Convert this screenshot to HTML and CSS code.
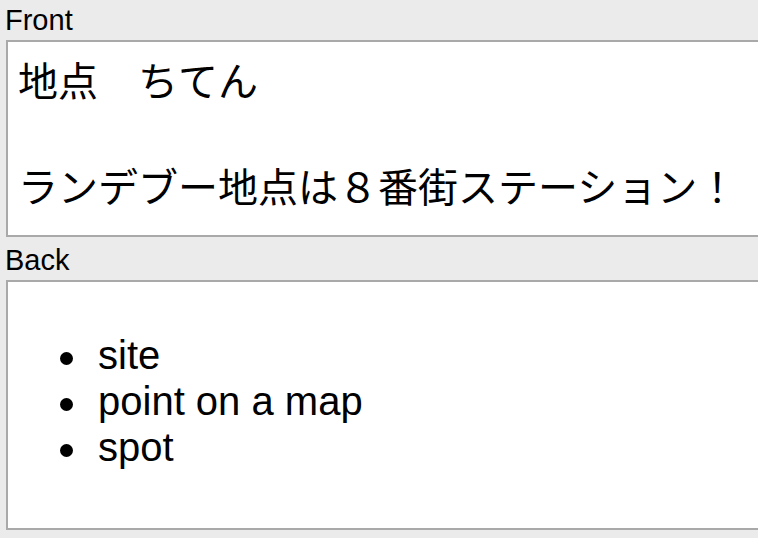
FILE: index.html
```html
<!DOCTYPE html>
<html lang="ja">
<head>
<meta charset="utf-8">
<title>Editor</title>
<link rel="stylesheet" href="styles.css">
</head>
<body>
<div class="editor">
  <div class="fname first">Front</div>
  <div class="field front">地点　ちてん<br><br>ランデブー地点は８番街ステーション！</div>
  <div class="fname">Back</div>
  <div class="field back">
    <ul>
      <li>site</li>
      <li>point on a map</li>
      <li>spot</li>
    </ul>
  </div>
</div>
</body>
</html>
```

FILE: styles.css
```css
html, body {
  margin: 0;
  padding: 0;
  background: #ebebeb;
  overflow: hidden;
}

.editor {
  display: flex;
  flex-direction: column;
  padding-left: 6px;
  width: 780px;
  font-family: "Liberation Sans", "Noto Sans CJK JP", sans-serif;
  color: #000;
}

.fname {
  font-size: 29px;
  line-height: 32px;
  padding: 7px 0 4px 0;
  margin-left: -1px;
}

.fname.first {
  padding-top: 4px;
}

.field {
  background: #fff;
  border: 2px solid #a9a9a9;
  font-size: 40px;
  padding: 10px;
}

.front {
  line-height: 53px;
  padding-top: 14px;
  padding-bottom: 20px;
}

.back {
  line-height: 46px;
  padding-bottom: 18px;
}

.back ul {
  margin: 40px 0;
  padding-left: 80px;
  list-style: none;
}

.back li::before {
  content: "";
  display: inline-block;
  width: 13px;
  height: 13px;
  border-radius: 50%;
  background: #000;
  margin-left: -38px;
  margin-right: 25px;
  vertical-align: 4px;
}
```
